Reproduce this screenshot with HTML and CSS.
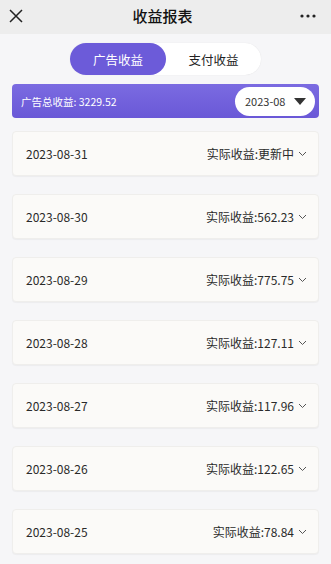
FILE: index.html
```html
<!DOCTYPE html>
<html lang="zh">
<head>
<meta charset="utf-8">
<title>收益报表</title>
<link rel="stylesheet" href="styles.css">
</head>
<body>
<div class="topbar">
  <svg class="close" width="14" height="14" viewBox="0 0 14 14"><path d="M1 1L13 13M13 1L1 13" stroke="#222" stroke-width="1.5" fill="none"/></svg>
  <div class="title">收益报表</div>
  <svg class="more" width="16" height="4" viewBox="0 0 16 4"><circle cx="2" cy="2" r="1.6" fill="#222"/><circle cx="8" cy="2" r="1.6" fill="#222"/><circle cx="14" cy="2" r="1.6" fill="#222"/></svg>
</div>

<div class="tabs">
  <div class="tab active">广告收益</div>
  <div class="tab">支付收益</div>
</div>

<div class="banner">
  <span class="total">广告总收益: 3229.52</span>
  <div class="month">
    <span>2023-08</span>
    <svg width="12" height="7" viewBox="0 0 12 7"><path d="M0 0H12L6 7Z" fill="#333"/></svg>
  </div>
</div>

<div class="list">
  <div class="card"><span class="date">2023-08-31</span><span class="amt">实际收益:更新中<svg class="chev" width="9" height="6" viewBox="0 0 9 6"><path d="M1 1L4.5 4.5L8 1" stroke="#555" stroke-width="1" fill="none"/></svg></span></div>
  <div class="card"><span class="date">2023-08-30</span><span class="amt">实际收益:562.23<svg class="chev" width="9" height="6" viewBox="0 0 9 6"><path d="M1 1L4.5 4.5L8 1" stroke="#555" stroke-width="1" fill="none"/></svg></span></div>
  <div class="card"><span class="date">2023-08-29</span><span class="amt">实际收益:775.75<svg class="chev" width="9" height="6" viewBox="0 0 9 6"><path d="M1 1L4.5 4.5L8 1" stroke="#555" stroke-width="1" fill="none"/></svg></span></div>
  <div class="card"><span class="date">2023-08-28</span><span class="amt">实际收益:127.11<svg class="chev" width="9" height="6" viewBox="0 0 9 6"><path d="M1 1L4.5 4.5L8 1" stroke="#555" stroke-width="1" fill="none"/></svg></span></div>
  <div class="card"><span class="date">2023-08-27</span><span class="amt">实际收益:117.96<svg class="chev" width="9" height="6" viewBox="0 0 9 6"><path d="M1 1L4.5 4.5L8 1" stroke="#555" stroke-width="1" fill="none"/></svg></span></div>
  <div class="card"><span class="date">2023-08-26</span><span class="amt">实际收益:122.65<svg class="chev" width="9" height="6" viewBox="0 0 9 6"><path d="M1 1L4.5 4.5L8 1" stroke="#555" stroke-width="1" fill="none"/></svg></span></div>
  <div class="card"><span class="date">2023-08-25</span><span class="amt">实际收益:78.84<svg class="chev" width="9" height="6" viewBox="0 0 9 6"><path d="M1 1L4.5 4.5L8 1" stroke="#555" stroke-width="1" fill="none"/></svg></span></div>
</div>
</body>
</html>
```

FILE: styles.css
```css
* { box-sizing: border-box; }
html, body { margin: 0; padding: 0; }
body {
  background: #f6f6f8;
  font-family: "Noto Sans CJK SC", "Noto Sans", sans-serif;
  color: #222;
  width: 331px;
  height: 564px;
  overflow: hidden;
}
.topbar {
  height: 34px;
  background: #ededed;
  display: flex;
  align-items: center;
  justify-content: space-between;
  padding: 0 15px 0 9px;
}
.close { display: block; margin-top: -3px; }
.more { display: block; margin-top: -3px; }
.title {
  font-size: 15px;
  font-weight: 500;
  color: #111;
  margin-top: -3px;
  margin-left: 2px;
}
.tabs {
  width: 191px;
  height: 32px;
  margin: 9px auto 0;
  background: #fff;
  border-radius: 16px;
  display: flex;
  box-shadow: 0 0 1px rgba(0,0,0,0.12);
}
.tab {
  flex: 1;
  display: flex;
  align-items: center;
  justify-content: center;
  font-size: 12.5px;
  color: #222;
  border-radius: 16px;
}
.tab.active {
  flex: 0 0 96px;
  background: #6c5bd9;
  color: #fff;
}
.banner {
  margin: 9px 12px 0;
  height: 34px;
  border-radius: 4px;
  background: linear-gradient(180deg, #7b6be1 0%, #6a58d7 100%);
  display: flex;
  align-items: center;
  justify-content: space-between;
  padding: 0 4px 0 9px;
}
.total {
  font-size: 10.5px;
  color: #fff;
}
.month {
  width: 80px;
  height: 29px;
  background: #fff;
  border-radius: 15px;
  display: flex;
  align-items: center;
  justify-content: space-between;
  padding: 0 9px 0 10px;
  font-size: 11px;
  color: #333;
}
.month svg { display: block; }
.list {
  margin: 13px 12px 0;
  display: flex;
  flex-direction: column;
  gap: 18px;
}
.card {
  height: 45px;
  background: #fbfaf8;
  border-radius: 4px;
  border: 1px solid #efeeec;
  box-shadow: 0 1px 1px rgba(0,0,0,0.04);
  display: flex;
  align-items: center;
  justify-content: space-between;
  padding: 0 11px 0 13px;
  font-size: 12px;
}
.date { color: #2a2a2a; }
.amt {
  display: flex;
  align-items: center;
  color: #2a2a2a;
}
.chev { display: block; margin-left: 4px; }
```
